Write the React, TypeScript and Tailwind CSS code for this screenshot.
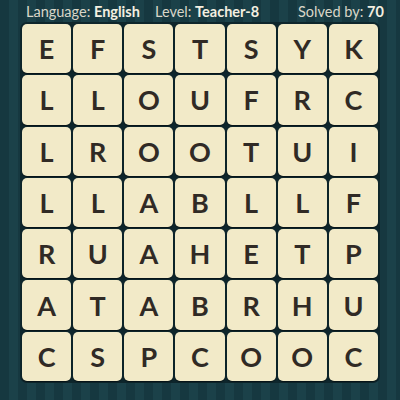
import React from 'react';

const rows: string[] = [
  'EFSTSYK',
  'LLOUFRC',
  'LROOTUI',
  'LLABLLF',
  'RUAHETP',
  'ATABRHU',
  'CSPCOOC',
];

const Tile: React.FC<{ letter: string }> = ({ letter }) => (
  <div className="flex items-center justify-center rounded-[5px] bg-[#f2eac8] shadow-[0_1px_1px_rgba(0,0,0,0.5)] text-[27px] font-bold text-[#302a25] leading-none">
    {letter}
  </div>
);

const App: React.FC = () => {
  return (
    <div
      className="w-[400px] h-[400px] overflow-hidden flex flex-col bg-[#173a41] bg-[repeating-linear-gradient(90deg,#163840_0px,#163840_9px,#1b4149_9px,#1b4149_18px)]"
      style={{ fontFamily: 'Lato, "Noto Sans", sans-serif' }}
    >
      {/* header */}
      <div className="h-[22px] flex items-center pl-[26px] text-[14.5px] text-[#d9d6c8] pt-[1px]">
        <span className="w-[129px]">
          Language: <b className="font-bold text-[#f3efe0]">English</b>
        </span>
        <span className="w-[143px]">
          Level: <b className="font-bold text-[#f3efe0]">Teacher-8</b>
        </span>
        <span>
          Solved by: <b className="font-bold text-[#f3efe0]">70</b>
        </span>
      </div>

      {/* board */}
      <div className="ml-[20px] w-[360px] h-[361px] rounded-[7px] bg-[#0e262c] p-[2px]">
        <div className="grid grid-cols-7 grid-rows-7 gap-[2px] w-full h-full">
          {rows.map((row, r) =>
            row.split('').map((ch, c) => <Tile key={`${r}-${c}`} letter={ch} />)
          )}
        </div>
      </div>
    </div>
  );
};

export default App;
